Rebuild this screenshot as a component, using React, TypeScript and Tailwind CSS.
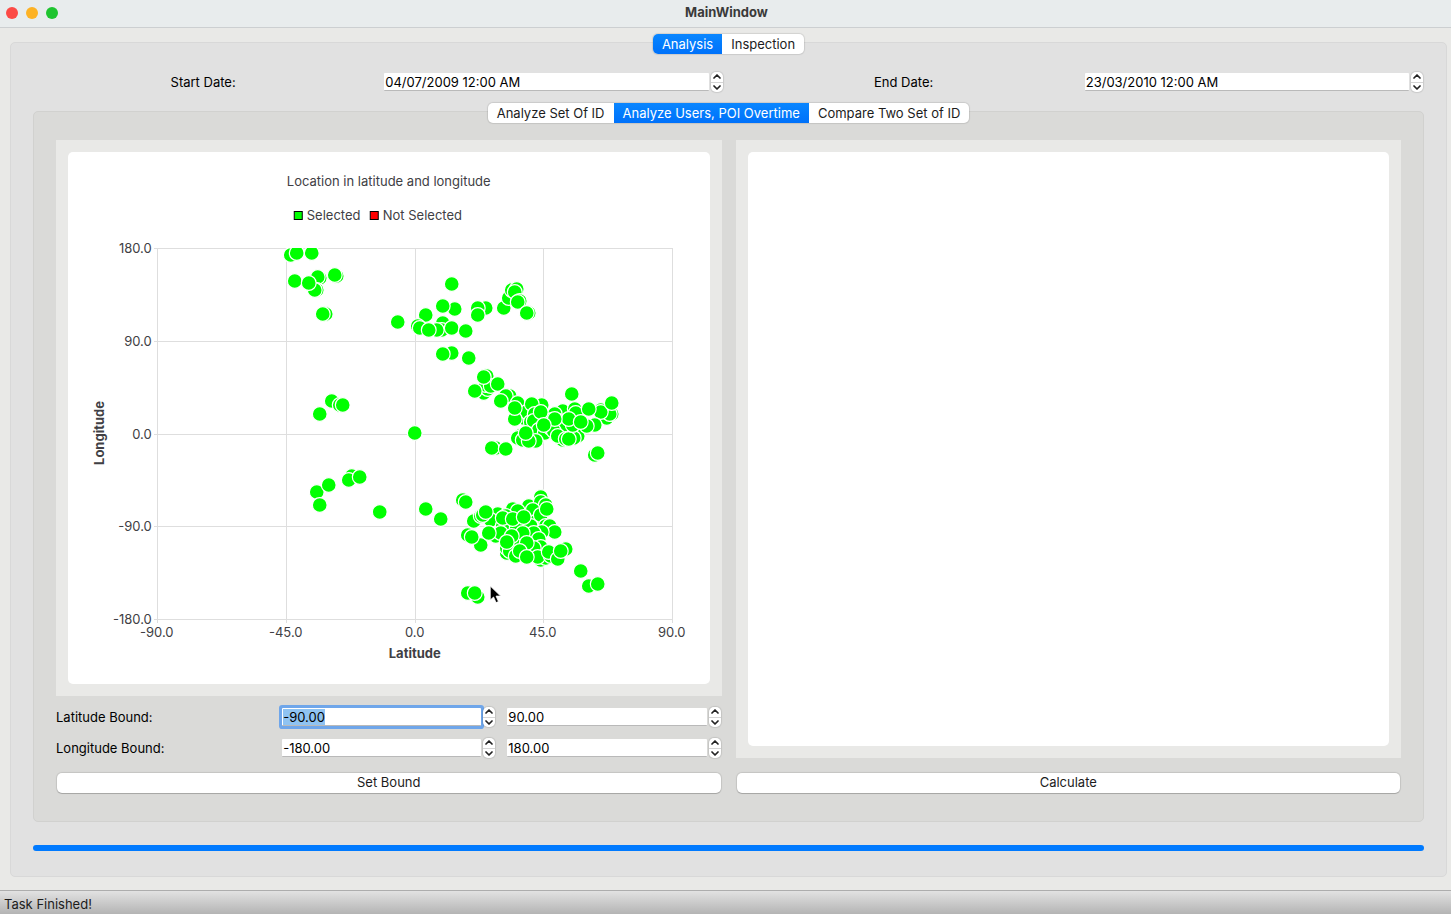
import { useEffect, useRef, useState } from "react";
import type { Ref } from "react";

type Point = [number, number];

const PLOT = { left: 157, right: 672, top: 248, bottom: 619 };

const X_TICKS = [
  { at: 157, label: "-90.0" },
  { at: 286, label: "-45.0" },
  { at: 415, label: "0.0" },
  { at: 543, label: "45.0" },
  { at: 672, label: "90.0" },
];

const Y_TICKS = [
  { at: 248, label: "180.0" },
  { at: 341, label: "90.0" },
  { at: 434, label: "0.0" },
  { at: 526, label: "-90.0" },
  { at: 619, label: "-180.0" },
];

// Later points are painted over earlier ones.
const POINTS: Point[] = [
  // Oceania
  [290, 255], [296, 253], [311, 253], [294, 281], [319, 278], [317, 277],
  [336, 276], [334, 275], [316, 290], [314, 290], [308, 283], [325, 314], [322, 314],
  // East and south Asia
  [397, 322], [451, 284], [454, 309], [442, 306], [425, 315], [442, 323],
  [417, 326], [419, 328], [441, 330], [436, 330], [428, 330], [451, 328],
  [465, 331], [485, 308], [477, 308], [477, 315], [503, 308], [508, 298],
  [511, 290], [516, 289], [514, 292], [519, 301], [517, 302], [528, 313],
  [526, 313], [451, 353], [442, 354], [468, 358],
  // Middle East
  [486, 376], [483, 393], [487, 389], [485, 385], [490, 386], [483, 377],
  [497, 384], [474, 391], [509, 396], [505, 396], [500, 401],
  // Europe
  [517, 403], [523, 418], [526, 412], [514, 419], [514, 408], [541, 405],
  [531, 404], [530, 422], [534, 414], [533, 421], [538, 430], [544, 433],
  [548, 418], [550, 428], [535, 441], [519, 436], [517, 438], [522, 440],
  [528, 441], [525, 433], [562, 411], [574, 409], [554, 414], [551, 420],
  [558, 421], [575, 413], [568, 430], [560, 430], [553, 431], [577, 436],
  [562, 440], [557, 436], [573, 438], [565, 439], [568, 439], [572, 425],
  [568, 419], [554, 419], [540, 412], [543, 425], [571, 394], [606, 418],
  [611, 414], [609, 414], [600, 410], [600, 412], [594, 425], [586, 426],
  [580, 422], [588, 409], [611, 403], [495, 448], [491, 448], [505, 449],
  [594, 455], [597, 453], [414, 433],
  // South America and southern Africa
  [331, 401], [339, 405], [342, 405], [319, 414], [316, 492], [328, 485],
  [351, 476], [348, 480], [359, 477], [319, 505], [379, 512], [425, 509],
  [440, 519], [462, 500], [465, 502],
  // North America
  [540, 497], [528, 506], [540, 502], [545, 505], [532, 510], [512, 509],
  [517, 511], [497, 514], [490, 520], [505, 516], [473, 521], [480, 516],
  [482, 515], [485, 512], [502, 526], [510, 524], [516, 528], [535, 522],
  [530, 526], [540, 515], [546, 509], [502, 518], [512, 519], [523, 517],
  [467, 535], [480, 545], [471, 537], [495, 536], [500, 533], [488, 533],
  [545, 526], [549, 526], [554, 532], [541, 532], [533, 533], [538, 539],
  [540, 547], [533, 548], [517, 542], [522, 533], [526, 543], [511, 536],
  [506, 553], [506, 548], [509, 551], [506, 542], [515, 556], [519, 551],
  [540, 560], [545, 558], [537, 557], [526, 557], [550, 556], [548, 552],
  [557, 559], [565, 549], [560, 551],
  // Alaska and Hawaii
  [580, 571], [588, 586], [597, 584], [467, 593], [477, 597], [474, 593],
];

function ScatterChart() {
  return (
    <svg
      viewBox="68 152 640 532"
      role="img"
      aria-label="Location in latitude and longitude"
      className="block h-[532px] w-full fill-[#404044] text-[13px]"
    >
      <text x="388" y="186" textAnchor="middle">
        Location in latitude and longitude
      </text>

      <rect x="293.5" y="211.5" width="8" height="8" fill="#00ff00" stroke="#000" />
      <text x="306" y="220">Selected</text>
      <rect x="369.5" y="211.5" width="8" height="8" fill="#ff0000" stroke="#000" />
      <text x="382" y="220">Not Selected</text>

      <g stroke="#dedede" shapeRendering="crispEdges">
        {X_TICKS.map((tick) => (
          <line key={tick.label} x1={tick.at} x2={tick.at} y1={PLOT.top} y2={PLOT.bottom + 4} />
        ))}
        {Y_TICKS.map((tick) => (
          <line key={tick.label} x1={PLOT.left - 4} x2={PLOT.right} y1={tick.at} y2={tick.at} />
        ))}
      </g>

      {X_TICKS.map((tick) => (
        <text key={tick.label} x={tick.at - 1} y="637" textAnchor="middle">
          {tick.label}
        </text>
      ))}
      {Y_TICKS.map((tick) => (
        <text key={tick.label} x="151" y={tick.at + 5} textAnchor="end">
          {tick.label}
        </text>
      ))}

      <text x="414" y="658" textAnchor="middle" className="font-bold">
        Latitude
      </text>
      <text transform="translate(103 433) rotate(-90)" textAnchor="middle" className="font-bold">
        Longitude
      </text>

      <clipPath id="plot-area">
        <rect x={PLOT.left} y={PLOT.top} width={PLOT.right - PLOT.left} height={PLOT.bottom - PLOT.top} />
      </clipPath>
      <g clipPath="url(#plot-area)" fill="#00ff00" stroke="#fff" strokeWidth="1.2">
        {POINTS.map(([x, y], index) => (
          <circle key={index} cx={x} cy={y} r="7.4" />
        ))}
      </g>

      <path
        d="M489.500 586v14l3.300-3 2.500 5.600 2.400-1-2.400-5.500h4.600z"
        fill="#000"
        stroke="#fff"
        strokeWidth="0.8"
      />
    </svg>
  );
}

function Chevron({ up }: { up?: boolean }) {
  return (
    <svg viewBox="0 0 8 5" className="h-[5px] w-2 fill-none stroke-[#222]" aria-hidden="true">
      <path d={up ? "M1 4l3-3 3 3" : "M1 1l3 3 3-3"} strokeWidth="1.7" strokeLinecap="round" strokeLinejoin="round" />
    </svg>
  );
}

type SpinFieldProps = {
  id?: string;
  label?: string;
  initial: string;
  inputRef?: Ref<HTMLInputElement>;
};

function SpinField({ id, label, initial, inputRef }: SpinFieldProps) {
  const [value, setValue] = useState(initial);
  const step = (delta: number) => {
    if (!value.includes("/")) setValue((Number(value) + delta).toFixed(2));
  };
  return (
    <div className="flex h-5 min-w-0 items-center gap-0.5 px-px">
      <input
        id={id}
        ref={inputRef}
        type="text"
        aria-label={label}
        value={value}
        onChange={(event) => setValue(event.target.value)}
        className="h-[18px] min-w-0 flex-1 rounded-[1px] border-b border-[#b9b9b9] bg-white px-px text-black outline-none selection:bg-[#8fc3f2] selection:text-black focus:ring-[3px] focus:ring-[#6fa6ea]"
      />
      <div className="flex h-5 w-3 flex-col divide-y divide-[#d5d5d5] overflow-hidden rounded-[5px] bg-white shadow-[0_0_1px_1px_rgba(0,0,0,0.10)]">
        <button type="button" aria-label="Increase" onClick={() => step(1)} className="flex flex-1 items-center justify-center">
          <Chevron up />
        </button>
        <button type="button" aria-label="Decrease" onClick={() => step(-1)} className="flex flex-1 items-center justify-center">
          <Chevron />
        </button>
      </div>
    </div>
  );
}

function Tabs({ items, initial, name }: { items: string[]; initial: number; name: string }) {
  const [active, setActive] = useState(initial);
  return (
    <div
      role="tablist"
      aria-label={name}
      className="relative flex h-5 overflow-hidden rounded-[5px] bg-white shadow-[0_0_1px_1px_rgba(0,0,0,0.10)]"
    >
      {items.map((item, index) => (
        <button
          key={item}
          type="button"
          role="tab"
          aria-selected={index === active}
          onClick={() => setActive(index)}
          className={
            index === active
              ? "bg-linear-to-b from-[#0a86ff] to-[#0071fa] px-[9px] text-white"
              : "px-[9px] text-[#1c1c1c]"
          }
        >
          {item}
        </button>
      ))}
    </div>
  );
}

function PushButton({ children }: { children: string }) {
  return (
    <button
      type="button"
      className="mx-px h-5 rounded-[5px] bg-white pb-0.5 text-[#1c1c1c] shadow-[0_0_1px_1px_rgba(0,0,0,0.10),0_1px_0_0_rgba(0,0,0,0.15)]"
    >
      {children}
    </button>
  );
}

export default function App() {
  const firstBound = useRef<HTMLInputElement>(null);

  useEffect(() => {
    firstBound.current?.focus();
    firstBound.current?.select();
  }, []);

  return (
    <div className="flex min-h-screen flex-col bg-[#e9e9e7] font-[Inter,sans-serif] text-[13px] leading-4 text-black">
      <header className="grid h-7 grid-cols-[1fr_auto_1fr] items-center border-b border-[#cccfd1] bg-[#e8eced] pr-1 pb-0.5 pl-1.5">
        <div className="flex gap-2">
          <button type="button" aria-label="Close" className="size-3 rounded-full bg-[#fc4a45]" />
          <button type="button" aria-label="Minimize" className="size-3 rounded-full bg-[#fdb224]" />
          <button type="button" aria-label="Zoom" className="size-3 rounded-full bg-[#1ec42f]" />
        </div>
        <h1 className="pb-0.5 font-bold text-[#3a3a3a]">MainWindow</h1>
      </header>

      <main className="flex flex-1 flex-col pt-1.5 pr-1 pb-[13px] pl-2.5">
        <div className="z-10 flex justify-center">
          <Tabs name="Main sections" items={["Analysis", "Inspection"]} initial={0} />
        </div>

        <section className="-mt-3 flex flex-1 flex-col rounded-[5px] border border-[#d8d8d8] bg-[#e1e1e1] px-[22px] pt-[29px] pb-[25px]">
          <div className="grid grid-cols-4 items-center gap-2.5">
            <label htmlFor="start-date" className="text-center">
              Start Date:
            </label>
            <SpinField id="start-date" initial="04/07/2009 12:00 AM" />
            <label htmlFor="end-date" className="text-center">
              End Date:
            </label>
            <SpinField id="end-date" initial="23/03/2010 12:00 AM" />
          </div>

          <div className="z-10 mt-[11px] flex justify-center">
            <Tabs
              name="Analysis views"
              items={["Analyze Set Of ID", "Analyze Users, POI Overtime", "Compare Two Set of ID"]}
              initial={1}
            />
          </div>

          <div className="-mt-3 grid flex-1 grid-cols-2 gap-3.5 rounded-[5px] border border-[#d1d1cf] bg-[#dadad8] px-[22px] pt-7 pb-7">
            <div className="flex flex-col">
              <div className="flex flex-1 flex-col justify-center bg-[#e9e9e7] p-3">
                <div className="flex-1 rounded-[5px] bg-white">
                  <ScatterChart />
                </div>
              </div>
              <div className="mt-[11px] grid grid-cols-3 items-center gap-x-2.5 gap-y-[11px]">
                <label htmlFor="latitude-min">Latitude Bound:</label>
                <SpinField id="latitude-min" initial="-90.00" inputRef={firstBound} />
                <SpinField label="Maximum latitude" initial="90.00" />
                <label htmlFor="longitude-min">Longitude Bound:</label>
                <SpinField id="longitude-min" initial="-180.00" />
                <SpinField label="Maximum longitude" initial="180.00" />
              </div>
              <div className="mt-[15px] flex flex-col">
                <PushButton>Set Bound</PushButton>
              </div>
            </div>

            <div className="flex flex-col">
              <div className="flex flex-1 flex-col bg-[#e9e9e7] p-3">
                <div className="flex-1 rounded-[5px] bg-white" />
              </div>
              <div className="mt-[15px] flex flex-col">
                <PushButton>Calculate</PushButton>
              </div>
            </div>
          </div>

          <progress
            value={100}
            max={100}
            aria-label="Task progress"
            className="mt-[23px] block h-1.5 w-full appearance-none overflow-hidden rounded-full bg-[#007aff] [&::-webkit-progress-bar]:bg-[#cfcfcf] [&::-webkit-progress-value]:bg-[#007aff]"
          />
        </section>
      </main>

      <footer className="flex h-6 items-center border-t border-[#adadad] bg-linear-to-b from-[#e2e2e2] to-[#b4b4b4] px-1 pt-0.5 text-[#1c1c1c]">
        Task Finished!
      </footer>
    </div>
  );
}
